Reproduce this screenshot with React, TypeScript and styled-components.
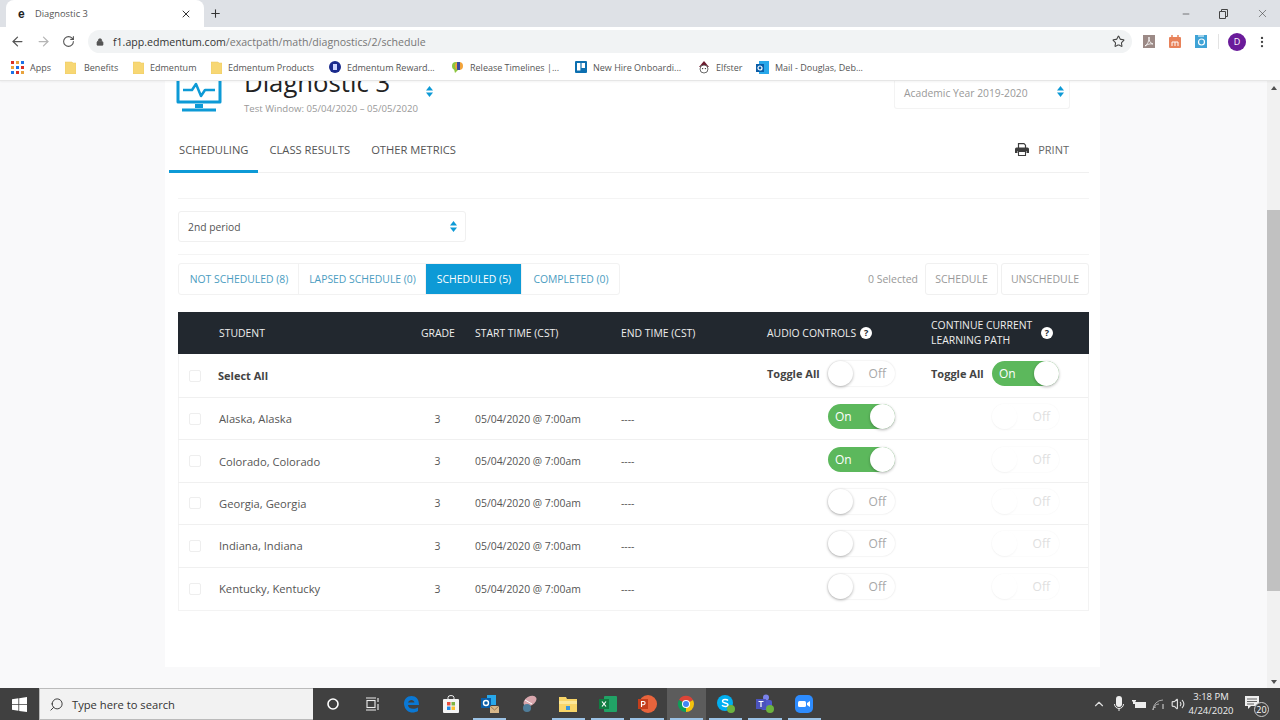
import * as React from "react";
import styled, { createGlobalStyle } from "styled-components";
import {
  ArrowLeft,
  ArrowRight,
  RotateCw,
  Lock,
  Star,
  X,
  Plus,
  Minus,
  Search,
  ChevronUp,
  Volume2,
  MoreVertical
} from "lucide-react";

const BLUE = "#0d9ad6";
const GREEN = "#5cb85c";

const GlobalStyle = createGlobalStyle`
  html, body {
    margin: 0;
    padding: 0;
    height: 100%;
    overflow: hidden;
  }
  body {
    font-family: "Open Sans", "Liberation Sans", sans-serif;
    color: #555;
  }
  * {
    box-sizing: border-box;
  }
`;

const SWrapper = styled.div`
  width: 1280px;
  height: 720px;
  display: flex;
  flex-direction: column;
  overflow: hidden;
`;

/* browser chrome */

const STabStrip = styled.div`
  height: 27px;
  flex: none;
  display: flex;
  align-items: flex-end;
  background: #dee1e6;
  padding-left: 6px;
`;

const STab = styled.div`
  width: 198px;
  height: 27px;
  display: flex;
  align-items: center;
  padding: 0 12px 0 12px;
  background: #fff;
  border-radius: 8px 8px 0 0;
  font-size: 9.3px;
  color: #555;
`;

const STabTitle = styled.span`
  flex: 1;
  margin-left: 7px;
`;

const SFavicon = styled.span`
  width: 10px;
  font-family: "Liberation Sans", sans-serif;
  font-size: 12px;
  line-height: 12px;
  font-weight: 700;
  color: #222;
`;

const SNewTab = styled.div`
  margin-left: 5px;
  height: 27px;
  display: flex;
  align-items: center;
  color: #333;
`;

const SWindowButtons = styled.div`
  margin-left: auto;
  height: 27px;
  display: flex;
  align-items: center;
  padding-right: 11px;
  gap: 28px;
  color: #333;
`;

const SRestore = styled.svg`
  display: block;
`;

const SToolbar = styled.div`
  height: 29px;
  flex: none;
  display: flex;
  align-items: center;
  background: #fff;
  padding: 0 11px 0 10px;
`;

const SNavButton = styled.div<{ $dim?: boolean }>`
  width: 15px;
  margin-right: 11px;
  display: flex;
  color: ${({ $dim }) => ($dim ? "#b5b5b5" : "#555")};
`;

const SOmnibox = styled.div`
  width: 1044px;
  height: 23px;
  display: flex;
  align-items: center;
  padding: 0 7px 0 8px;
  border-radius: 12px;
  background: #f1f3f4;
  font-size: 10.6px;
  color: #777;
`;

const SUrlHost = styled.span`
  color: #333;
  margin-left: 9px;
`;

const SOmniStar = styled.span`
  margin-left: auto;
  margin-right: 0;
  display: flex;
  color: #444;
`;

const SExtensions = styled.div`
  flex: 1;
  display: flex;
  align-items: center;
  justify-content: flex-end;
  gap: 14px;
`;

const SExtIcon = styled.svg`
  display: block;
  flex: none;
`;

const SExtDivider = styled.span`
  width: 1px;
  height: 15px;
  margin: 0 -5px 0 -3px;
  background: #e3e3e3;
`;

const SAvatar = styled.span`
  width: 18px;
  height: 18px;
  border-radius: 50%;
  background: #6a1b9a;
  color: #fff;
  font-size: 9px;
  display: flex;
  align-items: center;
  justify-content: center;
`;

const SDots = styled.span`
  display: flex;
  color: #444;
  margin-left: -5px;
`;

const SBookmarks = styled.div`
  height: 25px;
  flex: none;
  display: flex;
  align-items: center;
  padding: 0 0 2px 11px;
  background: #fff;
  border-bottom: 1px solid #e6e6e6;
  box-shadow: 0 1px 2px rgba(0, 0, 0, 0.05);
  font-size: 9px;
  color: #555;
  position: relative;
  z-index: 2;
`;

const SBookmark = styled.div<{ $width: number }>`
  width: ${({ $width }) => $width}px;
  flex: none;
  display: flex;
  align-items: center;
  white-space: nowrap;
`;

const SBookmarkIcon = styled.span<{ $gap: number }>`
  display: flex;
  margin-right: ${({ $gap }) => $gap}px;
`;

/* page */

const SPage = styled.div`
  flex: 1;
  display: flex;
  min-height: 0;
  background: #f9f9fa;
`;

const SScrollArea = styled.div`
  flex: 1;
  overflow: hidden;
  padding-left: 165px;
`;

const SSheet = styled.div`
  width: 935px;
  height: 605px;
  margin-top: -19px;
  background: #fff;
  padding: 0 11px 0 4px;
`;

const SHeaderRow = styled.div`
  height: 66px;
  display: flex;
  padding-left: 7px;
`;

const SMonitor = styled.svg`
  margin-top: 10px;
  flex: none;
`;

const STitleBlock = styled.div`
  margin-left: 22px;
  padding-top: 5px;
  width: 182px;
`;

const STitle = styled.h1`
  margin: 0;
  font-size: 25.7px;
  line-height: 32px;
  font-weight: 400;
  color: #222;
  white-space: nowrap;
`;

const STestWindow = styled.div`
  font-size: 9.6px;
  line-height: 14px;
  margin-top: 3px;
  color: #999;
  white-space: nowrap;
`;

const SSortArrows = styled.svg`
  flex: none;
  display: block;
`;

const STitleSort = styled.div`
  margin-top: 24px;
`;

const SYearSelect = styled.div`
  margin-left: auto;
  margin-right: 19px;
  width: 176px;
  height: 47px;
  padding: 24px 5px 0 9px;
  display: flex;
  justify-content: space-between;
  border: 1px solid #f3f3f3;
  border-top: 0;
  border-radius: 3px;
  font-size: 10.3px;
  line-height: 14px;
  color: #999;
`;

const STabs = styled.div`
  height: 45px;
  display: flex;
  align-items: stretch;
  border-bottom: 1px solid #f0f0f0;
`;

const STabLink = styled.div<{ $active?: boolean }>`
  padding: 0 10px;
  margin-right: 1px;
  display: flex;
  align-items: center;
  font-size: 11.2px;
  color: #555;
  border-bottom: 3px solid ${({ $active }) => ($active ? BLUE : "transparent")};
  margin-bottom: -1px;
`;

const SPrint = styled.div`
  margin-left: auto;
  margin-right: 20px;
  padding-bottom: 2px;
  display: flex;
  align-items: center;
  gap: 9px;
  font-size: 11px;
  color: #666;
`;

const SBody = styled.div`
  padding-left: 9px;
`;

const SRule = styled.div<{ $top: number }>`
  margin-top: ${({ $top }) => $top}px;
  border-top: 1px solid #f4f4f4;
`;

const SClassSelect = styled.div`
  margin-top: 12px;
  width: 288px;
  height: 31px;
  display: flex;
  align-items: center;
  justify-content: space-between;
  padding: 0 8px 0 9px;
  border: 1px solid #f0f0f0;
  border-radius: 3px;
  font-size: 10.3px;
  color: #555;
`;

const SFilterRow = styled.div`
  margin-top: 8px;
  height: 32px;
  display: flex;
  align-items: stretch;
`;

const SFilterGroup = styled.div`
  display: flex;
  border: 1px solid #f2f2f2;
  border-radius: 3px;
`;

const SFilter = styled.div<{ $active?: boolean; $width: number }>`
  width: ${({ $width }) => $width}px;
  display: flex;
  align-items: center;
  justify-content: center;
  padding-left: 1px;
  font-size: 10.4px;
  white-space: nowrap;
  color: ${({ $active }) => ($active ? "#fff" : "#4b9dc1")};
  background: ${({ $active }) => ($active ? BLUE : "transparent")};
  border-right: 1px solid #f2f2f2;
  &:last-child {
    border-right: 0;
  }
`;

const SActions = styled.div`
  margin-left: auto;
  display: flex;
  align-items: stretch;
  gap: 3px;
  font-size: 10.5px;
  color: #999;
`;

const SSelected = styled.span`
  align-self: center;
  margin-right: 4px;
`;

const SActionButton = styled.div<{ $width: number }>`
  width: ${({ $width }) => $width}px;
  display: flex;
  align-items: center;
  justify-content: center;
  border: 1px solid #f0f0f0;
  border-radius: 3px;
`;

const COLUMNS = "41px 201px 55px 146px 146px 164px 158px";

const STable = styled.div`
  margin-top: 17px;
  border: 1px solid #f3f3f3;
  border-top: 0;
`;

const STableHead = styled.div`
  margin: 0 -1px;
  height: 42px;
  display: grid;
  grid-template-columns: ${COLUMNS};
  align-items: center;
  background: #22282f;
  color: #eee;
  font-size: 10.4px;
  line-height: 15px;
`;

const SHeadCell = styled.div`
  display: flex;
  align-items: center;
`;

const SHeadText = styled(SHeadCell)<{ $indent?: number }>`
  padding-top: 1px;
  padding-left: ${({ $indent }) => $indent || 0}px;
`;

const SHelp = styled.span<{ $gap: number }>`
  width: 12px;
  height: 12px;
  margin-left: ${({ $gap }) => $gap}px;
  border-radius: 50%;
  background: #fff;
  color: #22282f;
  font-size: 9px;
  line-height: 12px;
  font-weight: 700;
  text-align: center;
  flex: none;
`;

const SHeadLabel = styled.span<{ $width?: number }>`
  width: ${({ $width }) => ($width ? `${$width}px` : "auto")};
`;

const SRow = styled.div<{ $height: number }>`
  height: ${({ $height }) => $height}px;
  margin-left: -1px;
  display: grid;
  grid-template-columns: ${COLUMNS};
  align-items: center;
  font-size: 10.4px;
  color: #555;
  border-bottom: 1px solid #f0f0f0;
  &:last-child {
    border-bottom: 0;
  }
`;

const SCheckCell = styled.div`
  padding-left: 11px;
`;

const SCheckbox = styled.span`
  display: block;
  width: 12px;
  height: 12px;
  border: 1px solid #eee;
  border-radius: 2px;
`;

const SStudent = styled.div`
  font-size: 11.2px;
`;

const SSelectAll = styled.div`
  font-size: 11px;
  font-weight: 700;
  color: #444;
  margin-left: -1px;
`;

const SGrade = styled.div`
  text-align: center;
  padding-right: 20px;
`;

const SToggleCell = styled.div`
  display: flex;
  align-items: center;
  margin-bottom: 4px;
`;

const SToggleAll = styled.span`
  width: 61px;
  font-size: 11px;
  font-weight: 700;
  color: #444;
  white-space: nowrap;
`;

const SToggleIndent = styled.span`
  width: 61px;
`;

const SSwitch = styled.div<{ $on?: boolean; $disabled?: boolean }>`
  width: 67px;
  height: 25px;
  position: relative;
  display: flex;
  align-items: center;
  border-radius: 13px;
  font-size: 12px;
  padding: ${({ $on }) => ($on ? "0 0 0 7px" : "0 9px 0 0")};
  justify-content: ${({ $on }) => ($on ? "flex-start" : "flex-end")};
  background: ${({ $on }) => ($on ? GREEN : "#fff")};
  color: ${({ $on, $disabled }) =>
    $on ? "#fff" : $disabled ? "#e0e0e0" : "#a8a8a8"};
  box-shadow: ${({ $on, $disabled }) =>
    $on ? "none" : `0 0 2px rgba(0, 0, 0, ${$disabled ? 0.05 : 0.14})`};
`;

const SThumb = styled.span<{ $on?: boolean; $disabled?: boolean }>`
  position: absolute;
  top: 0;
  width: 25px;
  height: 25px;
  border-radius: 50%;
  background: #fff;
  left: ${({ $on }) => ($on ? "42px" : "0")};
  box-shadow: ${({ $disabled }) =>
    $disabled
      ? "0 1px 2px rgba(0, 0, 0, 0.04)"
      : "0 1px 3px rgba(0, 0, 0, 0.3)"};
`;

/* scrollbar */

const SScrollbar = styled.div`
  width: 13px;
  flex: none;
  display: flex;
  flex-direction: column;
  background: #f1f1f1;
`;

const SScrollArrow = styled.div`
  height: 13px;
  flex: none;
  display: flex;
  align-items: center;
  justify-content: center;
`;

const SScrollSpace = styled.div<{ $height: number }>`
  height: ${({ $height }) => $height}px;
  flex: none;
`;

const SScrollThumb = styled.div`
  height: 381px;
  flex: none;
  background: #c1c1c1;
`;

/* taskbar */

const STaskbar = styled.div`
  height: 32px;
  flex: none;
  display: flex;
  align-items: center;
  background: #404040;
  color: #fff;
`;

const SStart = styled.div`
  width: 39px;
  height: 32px;
  display: flex;
  align-items: center;
  justify-content: center;
`;

const SSearch = styled.div`
  width: 274px;
  height: 32px;
  display: flex;
  align-items: center;
  gap: 8px;
  padding-left: 9px;
  background: #f2f2f2;
  border: 1px solid #bbb;
  border-width: 1px 0 1px 1px;
  font-size: 11.2px;
  color: #333;
`;

const SSearchIcon = styled(Search)`
  transform: scaleX(-1);
`;

const STaskIcons = styled.div`
  display: flex;
  height: 32px;
`;

const STaskIcon = styled.div<{ $active?: boolean; $running?: boolean }>`
  width: 39.3px;
  height: 32px;
  position: relative;
  display: flex;
  align-items: center;
  justify-content: center;
  background: ${({ $active }) => ($active ? "#5c5c5c" : "transparent")};
  &::after {
    content: "";
    position: absolute;
    left: 3px;
    right: 3px;
    bottom: 0;
    height: 2px;
    background: ${({ $running }) => ($running ? "#9cc3e6" : "transparent")};
  }
`;

const STray = styled.div`
  margin-left: auto;
  display: flex;
  align-items: center;
  gap: 6px;
  padding-right: 12px;
  height: 32px;
`;

const SClock = styled.div`
  width: 46px;
  margin-left: -3px;
  text-align: center;
  font-size: 9.5px;
  line-height: 14px;
  color: #eee;
  white-space: nowrap;
`;

const SNotify = styled.div`
  width: 24px;
  margin-left: 4px;
  position: relative;
  height: 22px;
`;

const SNotifyBadge = styled.span`
  position: absolute;
  right: -1px;
  bottom: -2px;
  width: 15px;
  height: 15px;
  border-radius: 50%;
  border: 1px solid #ccc;
  background: #404040;
  font-size: 9px;
  line-height: 13px;
  text-align: center;
`;

const SortArrows = () => (
  <SSortArrows width="7" height="11" viewBox="0 0 7 11">
    <path d="M3.5 0 7 4.4H0z" fill={BLUE} />
    <path d="M3.5 11 0 6.6h7z" fill={BLUE} />
  </SSortArrows>
);

const SortTriangle = ({ d }: { d: string }) => (
  <svg width="6" height="4" viewBox="0 0 6 4">
    <path d={d} fill="#505050" />
  </svg>
);

const Folder = () => (
  <svg width="11" height="13" viewBox="0 0 11 13">
    <path d="M0 1h7l1 1h3v11H0z" fill="#f7d774" stroke="#e8c45c" strokeWidth=".5" />
  </svg>
);

const AppsGrid = () => (
  <svg width="13" height="13" viewBox="0 0 13 13">
    {[0, 1, 2].map(row =>
      [0, 1, 2].map(col => (
        <rect
          key={`${row}-${col}`}
          x={col * 5}
          y={row * 5}
          width="3"
          height="3"
          fill={["#d93025", "#e8a33d", "#1a73e8"][(row + col) % 3]}
        />
      ))
    )}
  </svg>
);

const PrintIcon = () => (
  <svg width="14" height="13" viewBox="0 0 14 13" fill="none" stroke="#3d3d3d">
    <path d="M3.500 5V.7h5.500l1.500 1.500V5" strokeWidth="1.200" />
    <path d="M1.500 4.500h11A1.500 1.500 0 0 1 14 6v4h-2.500V8h-9v2H0V6a1.500 1.500 0 0 1 1.500-1.500z" fill="#3d3d3d" stroke="none" />
    <path d="M3.500 8.500h7v4h-7z" strokeWidth="1.100" />
  </svg>
);

const bookmarks = [
  { name: "Apps", width: 54, gap: 6, icon: <AppsGrid /> },
  { name: "Benefits", width: 68, gap: 8, icon: <Folder /> },
  { name: "Edmentum", width: 78, gap: 6, icon: <Folder /> },
  { name: "Edmentum Products", width: 118, gap: 6, icon: <Folder /> },
  {
    name: "Edmentum Reward...",
    width: 122,
    gap: 6,
    icon: (
      <svg width="12" height="12" viewBox="0 0 12 12">
        <circle cx="6" cy="6" r="6" fill="#1a2a8c" />
        <rect x="4" y="3" width="4" height="6" fill="#cfd6ff" />
      </svg>
    )
  },
  {
    name: "Release Timelines |...",
    width: 124,
    gap: 6,
    icon: (
      <svg width="13" height="12" viewBox="0 0 13 12">
        <circle cx="5" cy="5" r="4" fill="#8dc63f" />
        <circle cx="8" cy="5" r="4" fill="#f2a33a" />
        <rect x="6" y="1" width="3" height="8" fill="#3b4aa0" />
        <path d="M3 8l1 4 3-3z" fill="#8dc63f" />
      </svg>
    )
  },
  {
    name: "New Hire Onboardi...",
    width: 123,
    gap: 6,
    icon: (
      <svg width="12" height="12" viewBox="0 0 12 12">
        <rect width="12" height="12" rx="1" fill="#0c6fb0" />
        <rect x="2" y="2" width="3.4" height="7.5" fill="#fff" />
        <rect x="6.6" y="2" width="3.4" height="5" fill="#fff" />
      </svg>
    )
  },
  {
    name: "Elfster",
    width: 58,
    gap: 6,
    icon: (
      <svg width="12" height="13" viewBox="0 0 12 13">
        <path d="M1 6 6 0l5 6z" fill="#6d1a2d" />
        <circle cx="6" cy="8" r="4" fill="#fff" stroke="#444" strokeWidth=".8" />
        <circle cx="4.6" cy="7.6" r=".7" fill="#333" />
        <circle cx="7.4" cy="7.6" r=".7" fill="#333" />
      </svg>
    )
  },
  {
    name: "Mail - Douglas, Deb...",
    width: 130,
    gap: 6,
    icon: (
      <svg width="13" height="13" viewBox="0 0 13 13">
        <rect x="3" y="0" width="10" height="13" fill="#28a8ea" />
        <rect x="0" y="3" width="8" height="8" fill="#0a5ea8" />
        <circle cx="4" cy="7" r="2" fill="none" stroke="#fff" strokeWidth="1.2" />
      </svg>
    )
  }
];

const students = ["Alaska, Alaska", "Colorado, Colorado", "Georgia, Georgia", "Indiana, Indiana", "Kentucky, Kentucky"];
const audioOn = [true, true, false, false, false];

const Switch = ({ on, disabled }: { on?: boolean; disabled?: boolean }) => (
  <SSwitch $on={on} $disabled={disabled}>
    {on ? "On" : "Off"}
    <SThumb $on={on} $disabled={disabled} />
  </SSwitch>
);

const taskIcons: { key: string; active?: boolean; running?: boolean; icon: React.ReactNode }[] = [
  {
    key: "cortana",
    icon: (
      <svg width="14" height="14" viewBox="0 0 14 14">
        <circle cx="7" cy="7" r="5" fill="none" stroke="#fff" strokeWidth="1.6" />
      </svg>
    )
  },
  {
    key: "taskview",
    icon: (
      <svg width="14" height="14" viewBox="0 0 14 14" fill="none" stroke="#eee" strokeWidth="1.1">
        <rect x="2" y="3.5" width="8" height="7" />
        <path d="M1 1h10M1 13h10M13 1v4M13 7v6" />
      </svg>
    )
  },
  {
    key: "edge",
    icon: (
      <svg width="16" height="17" viewBox="0 0 16 17">
        <path d="M1 8C1 3 4 0 8.500 0 13 0 16 3 16 9H5c.3 4 6 5 10 2.500V15c-5 3-13 2-14-7zM5 6.500h6.500C11 3 6 3 5 6.500z" fill="#0a78d4" />
      </svg>
    )
  },
  {
    key: "store",
    icon: (
      <svg width="16" height="18" viewBox="0 0 16 18">
        <path d="M5 4V2.500a3 2 0 0 1 6 0V4" fill="none" stroke="#eee" />
        <rect y="4" width="16" height="14" rx="1" fill="#f5f5f5" />
        <rect x="4" y="7" width="3.500" height="3.500" fill="#e74c3c" />
        <rect x="8.500" y="7" width="3.500" height="3.500" fill="#7cb342" />
        <rect x="4" y="11.500" width="3.500" height="3.500" fill="#1e88e5" />
        <rect x="8.500" y="11.500" width="3.500" height="3.500" fill="#fbc02d" />
      </svg>
    )
  },
  {
    key: "outlook",
    running: true,
    icon: (
      <svg width="20" height="20" viewBox="0 0 20 20">
        <rect x="7" y="1" width="9" height="10" fill="#28a8ea" />
        <rect x="1" y="4" width="10" height="10" fill="#0a5ea8" />
        <circle cx="6" cy="9" r="2.500" fill="none" stroke="#fff" strokeWidth="1.400" />
        <rect x="10" y="12" width="9" height="7" fill="#d9b88a" />
        <path d="m10 12 4.500 4 4.500-4" fill="none" stroke="#9a7a50" />
      </svg>
    )
  },
  {
    key: "snip",
    icon: (
      <svg width="18" height="18" viewBox="0 0 18 18">
        <ellipse cx="10" cy="6" rx="7" ry="4.500" fill="#d9a7ad" transform="rotate(-30 10 6)" />
        <circle cx="7" cy="13" r="4" fill="#4f7d9a" />
        <path d="m5 5 7 4" stroke="#fff" />
      </svg>
    )
  },
  {
    key: "folder",
    running: true,
    icon: (
      <svg width="18" height="16" viewBox="0 0 18 16">
        <path d="M0 1h7l1 2h10v13H0z" fill="#f8d568" />
        <rect x="0" y="5" width="18" height="3" fill="#fbe79a" />
        <rect x="7" y="10" width="4" height="4" fill="#3a96dd" />
      </svg>
    )
  },
  {
    key: "excel",
    running: true,
    icon: (
      <svg width="18" height="18" viewBox="0 0 18 18">
        <rect x="5" y="1" width="13" height="16" rx="1" fill="#21a366" />
        <rect x="0" y="4" width="10" height="10" fill="#107c41" />
        <path d="m3 6.500 4 5M7 6.500l-4 5" stroke="#fff" strokeWidth="1.200" />
      </svg>
    )
  },
  {
    key: "powerpoint",
    running: true,
    icon: (
      <svg width="19" height="18" viewBox="0 0 19 18">
        <circle cx="10" cy="9" r="9" fill="#e8643c" />
        <rect x="0" y="4" width="10" height="10" fill="#c43e1c" />
        <path d="M3.500 12V6.500h2a1.500 1.500 0 0 1 0 3.200h-2" fill="none" stroke="#fff" strokeWidth="1.100" />
      </svg>
    )
  },
  {
    key: "chrome",
    active: true,
    running: true,
    icon: (
      <svg width="18" height="18" viewBox="0 0 18 18">
        <path d="M9 9 2 5a8 8 0 0 1 14 0z" fill="#db4437" />
        <path d="M9 9h8a8 8 0 0 1-8 8z" fill="#f4c20d" />
        <path d="M9 9v8a8 8 0 0 1-7-12z" fill="#0f9d58" />
        <path d="M9 9 16 5a8 8 0 0 1 1 4z" fill="#f4c20d" />
        <circle cx="9" cy="9" r="4" fill="#fff" />
        <circle cx="9" cy="9" r="3" fill="#4285f4" />
      </svg>
    )
  },
  {
    key: "skype",
    running: true,
    icon: (
      <svg width="20" height="20" viewBox="0 0 20 20">
        <circle cx="9" cy="9" r="8" fill="#00aff0" />
        <path d="M12 6.500C11 5 6.500 5 6.500 7.200 6.500 9.500 12 8.500 12 11c0 2-4.500 2-6 .3" fill="none" stroke="#fff" strokeWidth="1.400" />
        <circle cx="15" cy="15" r="4" fill="#6cb33f" />
      </svg>
    )
  },
  {
    key: "teams",
    running: true,
    icon: (
      <svg width="20" height="20" viewBox="0 0 20 20">
        <circle cx="11" cy="3.500" r="3" fill="#7b83eb" />
        <rect x="6" y="6" width="11" height="10" rx="2" fill="#5059c9" />
        <rect x="1" y="5" width="10" height="10" fill="#4b53bc" />
        <path d="M3.500 7.500h5M6 7.500V13" stroke="#fff" strokeWidth="1.200" />
        <circle cx="15" cy="15" r="4" fill="#6cb33f" />
      </svg>
    )
  },
  {
    key: "zoom",
    running: true,
    icon: (
      <svg width="18" height="18" viewBox="0 0 18 18">
        <rect width="18" height="18" rx="5" fill="#2d8cff" />
        <rect x="3" y="6" width="8" height="6" rx="1.500" fill="#fff" />
        <path d="m12 8 3-2v6l-3-2z" fill="#fff" />
      </svg>
    )
  }
];

const App = () => (
  <SWrapper>
    <GlobalStyle />
    <STabStrip>
      <STab>
        <SFavicon>e</SFavicon>
        <STabTitle>Diagnostic 3</STabTitle>
        <X size={12} color="#333" />
      </STab>
      <SNewTab>
        <Plus size={13} strokeWidth={2} />
      </SNewTab>
      <SWindowButtons>
        <Minus size={10} strokeWidth={1.5} />
        <SRestore width="9" height="10" viewBox="0 0 9 10" fill="none" stroke="#444">
          <path d="M.5 2.500h6v7h-6zM2.500 2.500v-2h6v7h-2" />
        </SRestore>
        <X size={13} strokeWidth={1} />
      </SWindowButtons>
    </STabStrip>
    <SToolbar>
      <SNavButton>
        <ArrowLeft size={15} />
      </SNavButton>
      <SNavButton $dim>
        <ArrowRight size={15} />
      </SNavButton>
      <SNavButton>
        <RotateCw size={13} />
      </SNavButton>
      <SOmnibox>
        <Lock size={8} fill="#555" color="#555" />
        <SUrlHost>f1.app.edmentum.com</SUrlHost>
        /exactpath/math/diagnostics/2/schedule
        <SOmniStar>
          <Star size={13} />
        </SOmniStar>
      </SOmnibox>
      <SExtensions>
        <SExtIcon width="12" height="13" viewBox="0 0 12 13">
          <rect width="12" height="13" fill="#9c8a86" />
          <path d="M2 11c3-2 4-5 4-9 0 4 1 6 4 7-3-.5-5 0-8 2z" fill="none" stroke="#fff" strokeWidth=".8" />
        </SExtIcon>
        <SExtIcon width="12" height="13" viewBox="0 0 12 13">
          <rect y="2" width="12" height="11" rx="1" fill="#e8825a" />
          <path d="M3 0v3M9 0v3" stroke="#e8825a" strokeWidth="1.500" />
          <path d="M3 11V7h6v4M6 7v4" fill="none" stroke="#fff" />
        </SExtIcon>
        <SExtIcon width="12" height="13" viewBox="0 0 12 13">
          <rect width="12" height="13" fill="#3fa3d6" />
          <circle cx="6.500" cy="7" r="3" fill="none" stroke="#fff" strokeWidth="1.200" />
          <path d="M3 1h6" stroke="#fff" />
        </SExtIcon>
        <SExtDivider />
        <SAvatar>D</SAvatar>
        <SDots>
          <MoreVertical size={14} />
        </SDots>
      </SExtensions>
    </SToolbar>
    <SBookmarks>
      {bookmarks.map(item => (
        <SBookmark key={item.name} $width={item.width}>
          <SBookmarkIcon $gap={item.gap}>{item.icon}</SBookmarkIcon>
          {item.name}
        </SBookmark>
      ))}
    </SBookmarks>
    <SPage>
      <SScrollArea>
        <SSheet>
          <SHeaderRow>
            <SMonitor width="46" height="46" viewBox="0 0 46 46" fill="none" stroke={BLUE} strokeWidth="3" strokeLinejoin="round">
              <path d="M2 2v28h42V2" />
              <path d="M7 18h9l4-6 5 12 4-6h10" strokeWidth="2.500" />
              <path d="M6 38h34" strokeWidth="3" />
              <path d="M19 34h8" strokeWidth="4" />
            </SMonitor>
            <STitleBlock>
              <STitle>Diagnostic 3</STitle>
              <STestWindow>Test Window: 05/04/2020 – 05/05/2020</STestWindow>
            </STitleBlock>
            <STitleSort>
              <SortArrows />
            </STitleSort>
            <SYearSelect>
              Academic Year 2019-2020
              <SortArrows />
            </SYearSelect>
          </SHeaderRow>
          <STabs>
            <STabLink $active>SCHEDULING</STabLink>
            <STabLink>CLASS RESULTS</STabLink>
            <STabLink>OTHER METRICS</STabLink>
            <SPrint>
              <PrintIcon />
              PRINT
            </SPrint>
          </STabs>
          <SBody>
            <SRule $top={25} />
            <SClassSelect>
              2nd period
              <SortArrows />
            </SClassSelect>
            <SRule $top={12} />
            <SFilterRow>
              <SFilterGroup>
                <SFilter $width={120}>NOT SCHEDULED (8)</SFilter>
                <SFilter $width={127}>LAPSED SCHEDULE (0)</SFilter>
                <SFilter $active $width={96}>SCHEDULED (5)</SFilter>
                <SFilter $width={97}>COMPLETED (0)</SFilter>
              </SFilterGroup>
              <SActions>
                <SSelected>0 Selected</SSelected>
                <SActionButton $width={73}>SCHEDULE</SActionButton>
                <SActionButton $width={88}>UNSCHEDULE</SActionButton>
              </SActions>
            </SFilterRow>
            <STable>
              <STableHead>
                <span />
                <SHeadText>STUDENT</SHeadText>
                <SHeadText $indent={1}>GRADE</SHeadText>
                <SHeadText>START TIME (CST)</SHeadText>
                <SHeadText>END TIME (CST)</SHeadText>
                <SHeadCell>
                  AUDIO CONTROLS
                  <SHelp $gap={4}>?</SHelp>
                </SHeadCell>
                <SHeadCell>
                  <SHeadLabel $width={105}>CONTINUE CURRENT LEARNING PATH</SHeadLabel>
                  <SHelp $gap={5}>?</SHelp>
                </SHeadCell>
              </STableHead>
              <SRow $height={44}>
                <SCheckCell>
                  <SCheckbox />
                </SCheckCell>
                <SSelectAll>Select All</SSelectAll>
                <span />
                <span />
                <span />
                <SToggleCell>
                  <SToggleAll>Toggle All</SToggleAll>
                  <Switch />
                </SToggleCell>
                <SToggleCell>
                  <SToggleAll>Toggle All</SToggleAll>
                  <Switch on />
                </SToggleCell>
              </SRow>
              {students.map((name, index) => (
                <SRow key={name} $height={42.4}>
                  <SCheckCell>
                    <SCheckbox />
                  </SCheckCell>
                  <SStudent>{name}</SStudent>
                  <SGrade>3</SGrade>
                  <div>05/04/2020 @ 7:00am</div>
                  <div>----</div>
                  <SToggleCell>
                    <SToggleIndent />
                    <Switch on={audioOn[index]} />
                  </SToggleCell>
                  <SToggleCell>
                    <SToggleIndent />
                    <Switch disabled />
                  </SToggleCell>
                </SRow>
              ))}
            </STable>
          </SBody>
        </SSheet>
      </SScrollArea>
      <SScrollbar>
        <SScrollArrow>
          <SortTriangle d="M3 0 6 4H0z" />
        </SScrollArrow>
        <SScrollSpace $height={116} />
        <SScrollThumb />
        <SScrollSpace $height={84} />
        <SScrollArrow>
          <SortTriangle d="M3 4 0 0h6z" />
        </SScrollArrow>
      </SScrollbar>
    </SPage>
    <STaskbar>
      <SStart>
        <svg width="15" height="15" viewBox="0 0 15 15" fill="#fff">
          <path d="M0 2.200 6.400 1.300V7H0zM7.200 1.200 15 0v7H7.200zM0 7.800h6.400v5.900L0 12.800zM7.200 7.800H15V15l-7.800-1.100z" />
        </svg>
      </SStart>
      <SSearch>
        <SSearchIcon size={15} color="#333" strokeWidth={1.5} />
        Type here to search
      </SSearch>
      <STaskIcons>
        {taskIcons.map(item => (
          <STaskIcon key={item.key} $active={item.active} $running={item.running}>
            {item.icon}
          </STaskIcon>
        ))}
      </STaskIcons>
      <STray>
        <ChevronUp size={14} color="#ddd" />
        <svg width="14" height="16" viewBox="0 0 14 16" fill="#eee">
          <rect x="4" y="0" width="6" height="11" rx="3" />
          <path d="M2.500 8a4.500 4.500 0 0 0 9 0M7 12.500V15" fill="none" stroke="#eee" />
        </svg>
        <svg width="14" height="10" viewBox="0 0 14 10" fill="#eee">
          <rect x="3" y="3" width="11" height="6" />
          <path d="M0 1h4v1.500H0zM1 2.500h2V5H1z" />
        </svg>
        <svg width="13" height="13" viewBox="0 0 13 13" fill="none" stroke="#aaa">
          <path d="M1 12a3 3 0 0 1 3-3M1 12a6 6 0 0 1 6-6M1 12a10 10 0 0 1 10-10" />
          <path d="M11 6v5" stroke="#ddd" />
        </svg>
        <Volume2 size={14} color="#ddd" />
        <SClock>
          3:18 PM
          <br />
          4/24/2020
        </SClock>
        <SNotify>
          <svg width="16" height="14" viewBox="0 0 16 14" fill="#eee">
            <path d="M1 0h14v10H7l-3 3v-3H1z" />
            <path d="M3 3h10M3 5.500h10M3 8h7" stroke="#404040" strokeWidth=".8" />
          </svg>
          <SNotifyBadge>20</SNotifyBadge>
        </SNotify>
      </STray>
    </STaskbar>
  </SWrapper>
);

export default App;
